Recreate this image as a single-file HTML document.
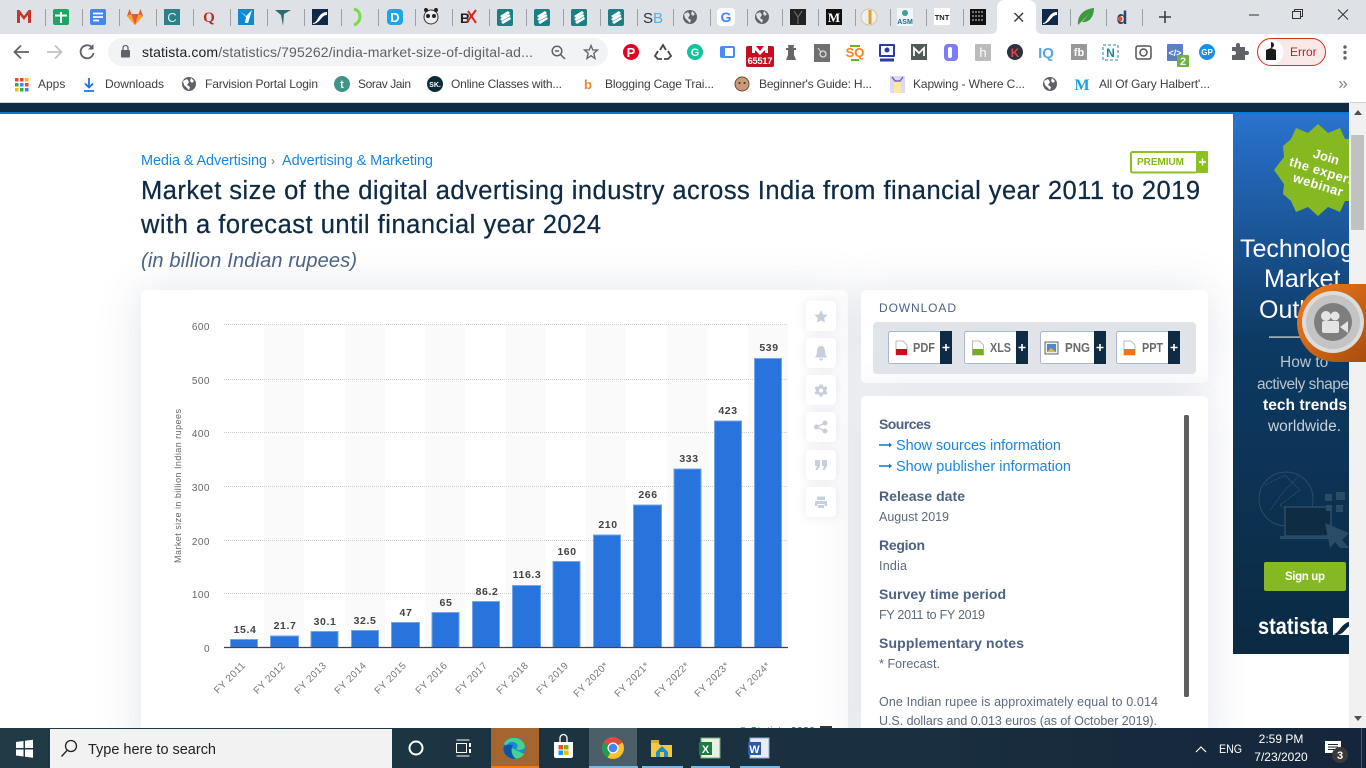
<!DOCTYPE html>
<html><head><meta charset="utf-8"><title>Statista</title>
<style>
html,body{margin:0;padding:0;width:1366px;height:768px;overflow:hidden;background:#fff}
.c{position:absolute;background:#fff;border-radius:5px;box-shadow:0 0 46px rgba(60,80,120,.15)}
svg{position:absolute;left:0;top:0}
text{font-family:"Liberation Sans",sans-serif}
</style></head><body>
<div class="c" style="left:141px;top:290px;width:707px;height:470px"></div>
<div class="c" style="left:861px;top:290px;width:347px;height:93px"></div>
<div class="c" style="left:861px;top:396px;width:347px;height:360px"></div>
<svg width="1366" height="768" viewBox="0 0 1366 768">
<defs>
<clipPath id="ad"><rect x="1233" y="114" width="116" height="540"/></clipPath>
<linearGradient id="adg" x1="0" y1="0" x2="0" y2="1"><stop offset="0" stop-color="#2a73cf"/><stop offset=".42" stop-color="#0c3a63"/><stop offset="1" stop-color="#0b2a42"/></linearGradient>
<linearGradient id="or" x1="0" y1="0" x2="1" y2="1"><stop offset="0" stop-color="#f57f1e"/><stop offset="1" stop-color="#a94c0c"/></linearGradient>
<linearGradient id="tb" x1="0" y1="0" x2="1" y2="0"><stop offset="0" stop-color="#1f3a44"/><stop offset=".6" stop-color="#1a3040"/><stop offset="1" stop-color="#15263b"/></linearGradient>
<g id="gl"><circle r="7" fill="#5f6368"/><path d="M-6 -3 L-2 -5 L0 -2 L-2 1 L1 3 L0 6 L-3 3 L-5 1Z M2 -6 L5 -3 L3 -1 L1 -3Z" fill="#dee1e6"/></g>
<g id="gb"><circle r="7" fill="#5f6368"/><path d="M-6 -3 L-2 -5 L0 -2 L-2 1 L1 3 L0 6 L-3 3 L-5 1Z M2 -6 L5 -3 L3 -1 L1 -3Z" fill="#fff"/></g>
<g id="st"><rect x="-8" y="-8" width="16" height="17" rx="2" fill="#1d7f83"/><path d="M-5 -1 L3 -6 L5 -4 L-3 1Z M-5 2 L4 -3 L5.500 -1 L-3 4Z M-4 5 L5 0 L6 2 L-2 7Z" fill="#fff"/></g>
<g id="sl"><rect x="-8" y="-8" width="16" height="16" fill="#10294a"/><path d="M-7 6 C-2 6 -2 -5 7 -5 L7 -2 C1 -2 1 6 -7 7Z" fill="#fff"/></g>
</defs>

<!-- tab strip -->
<rect width="1366" height="34" fill="#dee1e6"/>
<g stroke="#9aa0a6" stroke-width="1">
<path d="M45.5 9V26M82.5 9V26M119.5 9V26M156.5 9V26M193.5 9V26M230.5 9V26M267.5 9V26M304.5 9V26M341.5 9V26M378.5 9V26M415.5 9V26M452.5 9V26M489.5 9V26M526.5 9V26M563.5 9V26M600.5 9V26M637.5 9V26M673.5 9V26M710.5 9V26M747.5 9V26M782.5 9V26M818.5 9V26M855.5 9V26M890.5 9V26M926.5 9V26M963.5 9V26M1070.5 9V26M1106.5 9V26M1142.5 9V26"/>
</g>
<path d="M990 34 C996 34 997 31 997 27 V8 C997 3 1000 0 1005 0 H1028 C1033 0 1036 3 1036 8 V27 C1036 31 1037 34 1043 34Z" fill="#fff"/>
<!-- favicons -->
<path d="M17 23V10H19.5L24 16L28.500 10H31V23H28V15L24 20L20 15V23Z" fill="#c4392d"/>
<rect x="53" y="9" width="16" height="16" rx="2" fill="#1fa463"/><path d="M61 12V23M55 15.500H67" stroke="#fff" stroke-width="2"/>
<rect x="90" y="9" width="16" height="16" rx="2" fill="#4285f4"/><path d="M93 13.500H103M93 17H103M93 20.500H99" stroke="#fff" stroke-width="1.800"/>
<path d="M127 16L129.500 9L131.500 14H138.500L140.500 9L143 16L135 25Z" fill="#e2583e"/><path d="M127 16L135 25L131.500 14ZM143 16L135 25L138.500 14Z" fill="#fca326"/>
<rect x="164" y="9" width="16" height="16" fill="#2a8187"/><text x="172" y="22" font-size="13" fill="#d8f0f0" text-anchor="middle" font-family="Liberation Serif">C</text>
<text x="209" y="22" font-size="15" font-weight="bold" fill="#b92b27" text-anchor="middle" style="font-family:'Liberation Serif'">Q</text>
<rect x="238" y="9" width="16" height="16" fill="#0f8ad0"/><path d="M240 11 L246 16 L252 10 L248 23 L245 23 L246 17Z" fill="#fff"/>
<path d="M275 10 L291 10 L284 14 L283 26 L281 15Z" fill="#2d6b70"/>
<use href="#sl" x="320" y="17"/>
<path d="M354 9 C362 11 362 22 354 25" fill="none" stroke="#7bdc4a" stroke-width="3"/>
<rect x="387" y="9" width="16" height="16" rx="4" fill="#1ca6e8"/><text x="395" y="22" font-size="13" font-weight="bold" fill="#fff" text-anchor="middle">D</text>
<circle cx="431" cy="17" r="7" fill="#eee" stroke="#333"/><circle cx="428" cy="16" r="2" fill="#222"/><circle cx="434" cy="16" r="2" fill="#222"/><circle cx="426" cy="10" r="2" fill="#222"/><circle cx="436" cy="10" r="2" fill="#222"/>
<text x="465" y="23" font-size="14" font-weight="bold" fill="#222" text-anchor="middle">B</text><path d="M467 22L476 10M468 11L476 23" stroke="#d22" stroke-width="2"/>
<use href="#st" x="505" y="17"/><use href="#st" x="542" y="17"/><use href="#st" x="579" y="17"/><use href="#st" x="616" y="17"/>
<text x="653" y="23" font-size="15" fill="#333" text-anchor="end">S</text><text x="653" y="23" font-size="15" fill="#58aee0">B</text>
<use href="#gl" x="690" y="17"/>
<rect x="717" y="8" width="18" height="18" rx="4" fill="#fff"/><text x="726" y="22" font-size="14" font-weight="bold" fill="#4285f4" text-anchor="middle">G</text>
<use href="#gl" x="762" y="17"/>
<rect x="790" y="9" width="16" height="16" fill="#222"/><path d="M794 11L798 17L802 11M798 17V24" stroke="#777" fill="none"/>
<rect x="826" y="9" width="16" height="16" fill="#111"/><text x="834" y="22" font-size="13" font-weight="bold" fill="#fff" text-anchor="middle" style="font-family:'Liberation Serif'">M</text>
<circle cx="869" cy="17" r="8" fill="#eee" stroke="#cfc79a"/><path d="M870 10V24" stroke="#e0a030" stroke-width="3"/>
<rect x="897" y="8" width="16" height="18" fill="#eef6f6"/><circle cx="905" cy="13" r="3" fill="#3aa0a0"/><text x="905" y="24" font-size="7" font-weight="bold" fill="#1b6aa0" text-anchor="middle">ASM</text>
<rect x="934" y="8" width="16" height="17" fill="#fff"/><text x="942" y="20" font-size="7.500" font-weight="bold" fill="#222" text-anchor="middle">TNT</text>
<rect x="970" y="9" width="16" height="16" fill="#111"/><path d="M972 12H984M972 16H984M972 20H984" stroke="#aaa" stroke-width="1.200" stroke-dasharray="2 1"/>
<path d="M1014.500 13L1023 21.500M1023 13L1014.500 21.500" stroke="#3c4043" stroke-width="1.500"/>
<use href="#sl" x="1050" y="17"/>
<path d="M1078 25C1077 15 1084 9 1094 8C1094 17 1089 23 1082 22L1089 14" fill="#3e9a3c"/>
<text x="1122" y="24" font-size="18" font-weight="bold" fill="#27456e" text-anchor="middle">d</text><circle cx="1120" cy="19" r="2.500" fill="#e2552b"/>
<path d="M1165 11V23M1159 17H1171" stroke="#3c4043" stroke-width="1.600"/>
<path d="M1249 15H1259" stroke="#333"/>
<path d="M1292.500 11.500H1300.500V18.500H1292.500ZM1294.500 11V9.500H1302.500V16.500H1301" fill="none" stroke="#333"/>
<path d="M1338 9.500L1348 19.500M1348 9.500L1338 19.500" stroke="#333"/>

<!-- toolbar -->
<rect y="34" width="1366" height="34" fill="#fff"/>
<path d="M29 52H15M21 45.500L14.500 52L21 58.500" fill="none" stroke="#5f6368" stroke-width="1.800"/>
<path d="M47 52H61M55 45.500L61.500 52L55 58.500" fill="none" stroke="#bdc1c6" stroke-width="1.800"/>
<path d="M92 47.500A6.500 6.500 0 1 0 93.500 53" fill="none" stroke="#5f6368" stroke-width="1.800"/><path d="M93.500 44V49.500H88Z" fill="#5f6368"/>
<rect x="108" y="38" width="500" height="28" rx="14" fill="#f1f3f4"/>
<rect x="121" y="50" width="9" height="7.500" rx="1" fill="#5f6368"/><path d="M123 50V48A2.500 2.500 0 0 1 128 48V50" fill="none" stroke="#5f6368" stroke-width="1.300"/>
<text x="142" y="57" font-size="14" fill="#5f6368" textLength="391"><tspan fill="#202124">statista.com</tspan>/statistics/795262/india-market-size-of-digital-ad...</text>
<circle cx="557" cy="51" r="4.800" fill="none" stroke="#5f6368" stroke-width="1.500"/><path d="M560.500 54.500L565 59M555 51H559" stroke="#5f6368" stroke-width="1.500"/>
<path d="M591 45.500L592.800 50H597.500L593.800 53.200L595 58.500L591 55.700L587 58.500L588.200 53.200L584.500 50H589.200Z" fill="none" stroke="#5f6368" stroke-width="1.300"/>
<!-- extensions -->
<circle cx="631" cy="52" r="8" fill="#e60023"/><text x="631" y="57" font-size="13" font-weight="bold" fill="#fff" text-anchor="middle">P</text>
<path d="M660 50L663 45L666 50M668 51L671 56L668 59H664M658 51L655 56L658 59H662" fill="none" stroke="#444" stroke-width="1.800"/>
<circle cx="695" cy="52" r="8" fill="#15c39a"/><text x="695" y="56" font-size="11" font-weight="bold" fill="#fff" text-anchor="middle">G</text>
<rect x="720" y="46" width="15" height="12" rx="2" fill="#4c8bf5"/><rect x="725" y="48" width="8" height="8" fill="#fff"/>
<rect x="746" y="46" width="28" height="21" rx="2" fill="#c70d22"/><path d="M752 46H756L760 51L764 46H768V53H765V50L760 55L755 50V53H752Z" fill="#fff"/><text x="760" y="64" font-size="9.500" font-weight="bold" fill="#fff" text-anchor="middle" textLength="25">65517</text>
<path d="M788 45H794L793.500 48H796V50H794V55L796 60H786L788 55V50H786V48H788.500Z" fill="#666"/>
<rect x="814" y="44" width="16" height="18" fill="#707070"/><circle cx="823" cy="54" r="3" fill="none" stroke="#ddd" stroke-width="1.300"/><path d="M821 52L818 48" stroke="#ddd"/>
<text x="855" y="57" font-size="13" font-weight="bold" fill="#f58220" text-anchor="middle">SQ</text><path d="M850 46L860 46M851 60H859" stroke="#6ab023" stroke-width="2"/>
<rect x="879" y="44" width="16" height="13" rx="1" fill="#2c3ba8"/><rect x="881" y="46" width="12" height="9" fill="#fff"/><circle cx="887" cy="50" r="2.500" fill="#2c3ba8"/><path d="M880 60H894" stroke="#2c3ba8" stroke-width="3"/>
<rect x="911" y="44" width="16" height="16" fill="#4f5b55"/><path d="M914 56V48L919 53L924 48V56" fill="none" stroke="#fff" stroke-width="1.800"/>
<rect x="944" y="44" width="14" height="17" rx="4" fill="#7d7cf9"/><rect x="948" y="47" width="4" height="11" rx="2" fill="#fff"/>
<rect x="975" y="44" width="16" height="17" rx="1" fill="#bcbcbc"/><text x="983" y="57" font-size="13" fill="#fff" text-anchor="middle">h</text>
<circle cx="1015" cy="52" r="8" fill="#2b3340"/><text x="1015" y="57" font-size="12" font-weight="bold" fill="#e2433f" text-anchor="middle">K</text>
<text x="1046" y="58" font-size="15" font-weight="bold" fill="#59a6e4" text-anchor="middle">IQ</text>
<rect x="1071" y="44" width="16" height="16" fill="#999"/><text x="1079" y="56" font-size="11" font-weight="bold" fill="#fff" text-anchor="middle">fb</text>
<rect x="1103" y="45" width="15" height="15" fill="none" stroke="#18899a" stroke-dasharray="3 2"/><text x="1110.500" y="57" font-size="12" font-weight="bold" fill="#18899a" text-anchor="middle">N</text>
<rect x="1136" y="46" width="15" height="13" rx="2" fill="none" stroke="#555" stroke-width="1.500"/><circle cx="1143.500" cy="52.500" r="3.500" fill="none" stroke="#555" stroke-width="1.500"/>
<rect x="1167" y="44" width="16" height="17" rx="1" fill="#5a7fc2"/><text x="1175" y="56" font-size="9" font-weight="bold" fill="#fff" text-anchor="middle">&lt;/&gt;</text>
<rect x="1177" y="55" width="12" height="12" rx="1" fill="#6cb33f"/><text x="1183" y="65" font-size="11" font-weight="bold" fill="#fff" text-anchor="middle">2</text>
<circle cx="1207" cy="52" r="8" fill="#1a8fe3"/><text x="1207" y="55" font-size="8" font-weight="bold" fill="#fff" text-anchor="middle">GP</text>
<path d="M1232 47H1236V45A2 2 0 0 1 1240 45V47H1245V51H1247A2 2 0 0 1 1247 55H1245V60H1232V55H1234A2 2 0 0 0 1234 51H1232Z" fill="#5f6368"/>
<rect x="1257.500" y="38.500" width="68" height="27" rx="13.500" fill="#fbe9e7" stroke="#d93025"/>
<circle cx="1271" cy="52" r="12.500" fill="#fff"/><path d="M1271 42A3 3 0 0 1 1271 48L1276 50V60H1266V50L1271 48Z" fill="#1b1b1b"/>
<text x="1290" y="56" font-size="12" fill="#b3261e">Error</text>
<circle cx="1345" cy="47" r="1.700" fill="#5f6368"/><circle cx="1345" cy="52.500" r="1.700" fill="#5f6368"/><circle cx="1345" cy="58" r="1.700" fill="#5f6368"/>

<!-- bookmarks -->
<rect y="68" width="1366" height="34" fill="#fff"/><rect y="102" width="1366" height="1" fill="#d0d2d6"/>
<g>
<rect x="15" y="78" width="3.500" height="3.500" fill="#ea4335"/><rect x="20" y="78" width="3.500" height="3.500" fill="#ea4335"/><rect x="25" y="78" width="3.500" height="3.500" fill="#fbbc04"/>
<rect x="15" y="83" width="3.500" height="3.500" fill="#34a853"/><rect x="20" y="83" width="3.500" height="3.500" fill="#4285f4"/><rect x="25" y="83" width="3.500" height="3.500" fill="#ea4335"/>
<rect x="15" y="88" width="3.500" height="3.500" fill="#fbbc04"/><rect x="20" y="88" width="3.500" height="3.500" fill="#34a853"/><rect x="25" y="88" width="3.500" height="3.500" fill="#4285f4"/>
</g>
<g font-size="12" fill="#3c4043">
<text x="38" y="88">Apps</text>
<text x="105" y="88" textLength="59">Downloads</text>
<text x="205" y="88" textLength="113">Farvision Portal Login</text>
<text x="358" y="88" textLength="53">Sorav Jain</text>
<text x="451" y="88" textLength="111">Online Classes with...</text>
<text x="605" y="88" textLength="109">Blogging Cage Trai...</text>
<text x="759" y="88" textLength="113">Beginner's Guide: H...</text>
<text x="913" y="88" textLength="112">Kapwing - Where C...</text>
<text x="1099" y="88" textLength="111">All Of Gary Halbert'...</text>
</g>
<path d="M89 78V87M85 83.500L89 87.500L93 83.500M84 91H94" fill="none" stroke="#1a73e8" stroke-width="1.800"/>
<use href="#gb" x="189" y="84"/>
<circle cx="342" cy="84" r="8" fill="#3f9486"/><text x="342" y="88" font-size="11" font-weight="bold" fill="#fff" text-anchor="middle">t</text>
<circle cx="435" cy="84" r="8" fill="#0d2b36"/><text x="435" y="87" font-size="7" font-weight="bold" fill="#fff" text-anchor="middle">SK.</text>
<text x="588" y="89" font-size="13" font-weight="bold" fill="#e8872a" text-anchor="middle">b</text>
<circle cx="742" cy="84" r="7" fill="#c79a78" stroke="#6b4a36"/><circle cx="739.500" cy="83" r="1" fill="#333"/><circle cx="744.500" cy="83" r="1" fill="#333"/>
<rect x="890" y="76" width="15" height="17" fill="#dcdaf5"/><rect x="894" y="81" width="7" height="12" fill="#f8e9a5"/><path d="M892 77L895 81H900L903 77" stroke="#7468c4" fill="none" stroke-width="1.500"/>
<use href="#gb" x="1050" y="84"/>
<text x="1082" y="90" font-size="16" font-weight="bold" fill="#12a3e0" text-anchor="middle" style="font-family:'Liberation Serif'">M</text>
<path d="M1339.500 81L1342.500 84.500L1339.500 88M1343.500 81L1346.500 84.500L1343.500 88" fill="none" stroke="#888" stroke-width="1.300"/>

<!-- site header -->
<rect y="103" width="1349" height="9" fill="#0f2a43"/><rect y="112" width="1349" height="2" fill="#0a78d6"/>

<!-- heading -->
<g font-size="14.500" fill="#1a86e0">
<text x="141" y="165" textLength="126">Media &amp; Advertising</text>
<text x="271" y="165" font-size="12" fill="#667">›</text>
<text x="282" y="165" textLength="151">Advertising &amp; Marketing</text>
</g>
<g font-size="25.500" fill="#0f2a43" stroke="#0f2a43" stroke-width=".25">
<text x="141" y="199" textLength="1059">Market size of the digital advertising industry across India from financial year 2011 to 2019</text>
<text x="141" y="233" textLength="460">with a forecast until financial year 2024</text>
</g>
<text x="141" y="267" font-size="20" font-style="italic" fill="#4d6282" textLength="216">(in billion Indian rupees)</text>
<rect x="1131" y="152" width="66" height="20.500" rx="1.500" fill="#fff" stroke="#8cc11f" stroke-width="2"/>
<text x="1137" y="165" font-size="10" font-weight="bold" fill="#82b81a" textLength="47">PREMIUM</text>
<rect x="1197" y="151" width="11" height="22" rx="1" fill="#8cc11f"/><path d="M1202.500 158.500V165.500M1199 162H1206" stroke="#fff" stroke-width="1.500"/>

<!-- chart -->
<g fill="#fafafa"><rect x="264" y="324" width="40" height="323"/><rect x="345" y="324" width="40" height="323"/><rect x="425" y="324" width="40" height="323"/><rect x="506" y="324" width="40" height="323"/><rect x="586" y="324" width="40" height="323"/><rect x="667" y="324" width="40" height="323"/><rect x="748" y="324" width="40" height="323"/></g>
<g stroke="#cfcfcf" stroke-dasharray="1 1"><path d="M224 324.500H788M224 379.500H788M224 432.500H788M224 486.500H788M224 540.500H788M224 593.500H788"/></g>
<g fill="#2874dc" stroke="#74a5ea" stroke-width="1">
<rect x="230.500" y="639.500" width="27" height="8"/><rect x="270.500" y="636" width="28" height="11.500"/><rect x="311" y="631.500" width="27" height="16"/><rect x="351.500" y="630.500" width="27" height="17"/><rect x="391.500" y="622.500" width="28" height="25"/><rect x="432" y="612.500" width="27" height="35"/><rect x="472.500" y="601.500" width="27" height="46"/><rect x="512.500" y="585.500" width="28" height="62"/><rect x="553" y="561.500" width="27" height="86"/><rect x="593.500" y="535" width="27" height="112.500"/><rect x="633.500" y="505" width="28" height="142.500"/><rect x="674" y="469" width="27" height="178.500"/><rect x="714.500" y="421" width="27" height="226.500"/><rect x="754.500" y="358.500" width="27" height="289"/>
</g>
<path d="M224 647.500H788" stroke="#444" stroke-width="1.200"/>
<g font-size="10" fill="#666" text-anchor="end" letter-spacing=".5">
<text x="210" y="330">600</text><text x="210" y="384">500</text><text x="210" y="437">400</text><text x="210" y="491">300</text><text x="210" y="545">200</text><text x="210" y="598">100</text><text x="210" y="652">0</text>
</g>
<text transform="translate(181,486) rotate(-90)" font-size="9" fill="#666" text-anchor="middle" textLength="154">Market size in billion Indian rupees</text>
<g font-size="10.500" font-weight="bold" fill="#444" text-anchor="middle" letter-spacing=".6">
<text x="245" y="633">15.4</text><text x="285" y="629">21.7</text><text x="325" y="625">30.1</text><text x="365" y="624">32.5</text><text x="406" y="616">47</text><text x="446" y="606">65</text><text x="487" y="595">86.2</text><text x="527" y="578">116.3</text><text x="567" y="555">160</text><text x="608" y="528">210</text><text x="648" y="498">266</text><text x="689" y="462">333</text><text x="728" y="414">423</text><text x="769" y="351">539</text>
</g>
<g font-size="10" fill="#777" text-anchor="end" letter-spacing=".4">
<text transform="translate(246,666) rotate(-45)">FY 2011</text><text transform="translate(286,666) rotate(-45)">FY 2012</text><text transform="translate(327,666) rotate(-45)">FY 2013</text><text transform="translate(367,666) rotate(-45)">FY 2014</text><text transform="translate(407,666) rotate(-45)">FY 2015</text><text transform="translate(448,666) rotate(-45)">FY 2016</text><text transform="translate(488,666) rotate(-45)">FY 2017</text><text transform="translate(529,666) rotate(-45)">FY 2018</text><text transform="translate(569,666) rotate(-45)">FY 2019</text><text transform="translate(609,666) rotate(-45)">FY 2020*</text><text transform="translate(650,666) rotate(-45)">FY 2021*</text><text transform="translate(690,666) rotate(-45)">FY 2022*</text><text transform="translate(730,666) rotate(-45)">FY 2023*</text><text transform="translate(771,666) rotate(-45)">FY 2024*</text>
</g>
<text x="739" y="734" font-size="10.500" fill="#0f5f9f" textLength="76">© Statista 2020</text><path d="M820 726H832V733H820Z" fill="#333"/>

<!-- side actions -->
<g fill="#fff" style="filter:drop-shadow(0 0 5px rgba(70,90,130,.13))">
<rect x="806" y="301" width="30" height="30" rx="4"/><rect x="806" y="338" width="30" height="30" rx="4"/><rect x="806" y="375" width="30" height="30" rx="4"/><rect x="806" y="412" width="30" height="30" rx="4"/><rect x="806" y="450" width="30" height="30" rx="4"/><rect x="806" y="487" width="30" height="30" rx="4"/>
</g>
<g fill="#c9cfda" transform="translate(821 0)">
<path d="M0 310L2 314.200L6.500 314.900L3.200 318L4 322.500L0 320.400L-4 322.500L-3.200 318L-6.500 314.900L-2 314.200Z"/>
<path d="M0 346C-3 346 -4 348.500 -4 351C-4 354 -5 356 -6 357.500H6C5 356 4 354 4 351C4 348.500 3 346 0 346ZM-2 358.500H2A2 2 0 0 1 -2 358.500Z"/>
<path fill-rule="evenodd" d="M-1.300 384.500H1.300L1.800 386.300L3.500 387L5 386L6.500 388.300L5.200 389.700V391.300L6.500 392.700L5 395L3.500 394L1.800 394.700L1.300 396.500H-1.300L-1.800 394.700L-3.500 394L-5 395L-6.500 392.700L-5.200 391.300V389.700L-6.500 388.300L-5 386L-3.500 387L-1.800 386.300ZM0 388.500A2 2 0 1 0 0 392.500A2 2 0 1 0 0 388.500Z"/>
<circle cx="4" cy="423" r="2.500"/><circle cx="4" cy="431" r="2.500"/><circle cx="-4.500" cy="427" r="2.500"/><path d="M-4.500 427L4 423M-4.500 427L4 431" stroke="#c9cfda" stroke-width="1.500"/>
<path d="M-6 460H-1V466L-3.500 470H-5.500L-4 466H-6ZM1 460H6V466L3.500 470H1.500L3 466H1Z"/>
<path fill-rule="evenodd" d="M-4 496.500H4V500H-4ZM-6 501H6V506H3.500V504H-3.500V506H-6ZM-3 505H3V508H-3Z"/>
</g>

<!-- download -->
<text x="879" y="312" font-size="12" fill="#4d6282" textLength="77">DOWNLOAD</text>
<rect x="873" y="322" width="323" height="52" rx="4" fill="#e0e3e7"/>
<g fill="#fff" stroke="#a9b8cf"><rect x="888.500" y="331.500" width="63" height="32" rx="2"/><rect x="964.500" y="331.500" width="63" height="32" rx="2"/><rect x="1040.500" y="331.500" width="65" height="32" rx="2"/><rect x="1116.500" y="331.500" width="63" height="32" rx="2"/></g>
<g fill="#0f2a43"><rect x="940" y="331" width="12" height="33"/><rect x="1016" y="331" width="12" height="33"/><rect x="1094" y="331" width="12" height="33"/><rect x="1168" y="331" width="12" height="33"/></g>
<g stroke="#fff" stroke-width="1.600"><path d="M946 344V351M942.500 347.500H949.500M1022 344V351M1018.500 347.500H1025.500M1100 344V351M1096.500 347.500H1103.500M1174 344V351M1170.500 347.500H1177.500"/></g>
<g font-size="13" font-weight="bold" fill="#6a6a6a"><text x="913" y="352" textLength="22" lengthAdjust="spacingAndGlyphs">PDF</text><text x="990" y="352" textLength="21" lengthAdjust="spacingAndGlyphs">XLS</text><text x="1065" y="352" textLength="25" lengthAdjust="spacingAndGlyphs">PNG</text><text x="1142" y="352" textLength="21" lengthAdjust="spacingAndGlyphs">PPT</text></g>
<path d="M896 341H903L907 345V355H896Z" fill="#fff" stroke="#aaa" stroke-width=".8"/><rect x="896" y="349" width="11" height="6" fill="#c8101e"/>
<path d="M972.500 341H979.500L983.500 345V355H972.500Z" fill="#fff" stroke="#aaa" stroke-width=".8"/><rect x="972.500" y="349" width="11" height="6" fill="#74ac23"/>
<rect x="1045" y="342" width="13" height="12" fill="#eee" stroke="#666"/><rect x="1047" y="344" width="9" height="8" fill="#4a8bc4"/><path d="M1047 352L1051 348L1056 352Z" fill="#e8b53a"/>
<path d="M1124 341H1131L1135 345V355H1124Z" fill="#fff" stroke="#aaa" stroke-width=".8"/><rect x="1124" y="349" width="11" height="6" fill="#e8771f"/>

<!-- sources -->
<g font-size="14" font-weight="bold" fill="#4d6282">
<text x="879" y="429" textLength="52">Sources</text>
<text x="879" y="501" textLength="86">Release date</text>
<text x="879" y="550" textLength="46">Region</text>
<text x="879" y="599" textLength="127">Survey time period</text>
<text x="879" y="648" textLength="145">Supplementary notes</text>
</g>
<g font-size="14.500" fill="#1a86e0"><text x="896" y="450" textLength="165">Show sources information</text><text x="896" y="471" textLength="175">Show publisher information</text></g>
<g fill="#0a78d6"><path d="M879 444.300H889V442.500L892 445L889 447.500V445.700H879Z"/><path d="M879 465.300H889V463.500L892 466L889 468.500V466.700H879Z"/></g>
<g font-size="12.500" fill="#5d6a7a">
<text x="879" y="521" textLength="70">August 2019</text><text x="879" y="570" textLength="28">India</text><text x="879" y="619" textLength="106">FY 2011 to FY 2019</text><text x="879" y="668" textLength="61">* Forecast.</text>
<text x="879" y="706" textLength="279">One Indian rupee is approximately equal to 0.014</text><text x="879" y="725" textLength="278">U.S. dollars and 0.013 euros (as of October 2019).</text>
</g>
<rect x="1184" y="415" width="5" height="282" rx="1.500" fill="#5f5f5f"/>

<!-- ad -->
<g clip-path="url(#ad)">
<rect x="1233" y="114" width="116" height="540" fill="url(#adg)"/>
<path d="M1318 124L1328 133L1340 128L1345 139L1358 139L1358 152L1368 160L1362 170L1368 180L1358 188L1358 201L1345 201L1340 212L1328 207L1318 216L1308 207L1296 212L1291 201L1283 194L1284 184L1274 170L1284 157L1283 146L1291 139L1296 128L1308 133Z" fill="#85b821"/>
<g fill="#fff" font-weight="bold" text-anchor="middle"><text transform="translate(1325,161) rotate(17)" font-size="13">Join</text><text transform="translate(1320,175) rotate(17)" font-size="13" letter-spacing=".4">the expert</text><text transform="translate(1317,189) rotate(17)" font-size="13" letter-spacing=".4">webinar</text></g>
<text x="1240" y="257" font-size="25" fill="#fff">Technology</text>
<text x="1264" y="287" font-size="25" fill="#fff">Market</text>
<text x="1259" y="318" font-size="25" fill="#fff">Outlook</text>
<rect x="1269" y="336.500" width="70" height="1.200" fill="#ddd"/>
<text x="1280" y="367" font-size="15.500" fill="#b8c4cf">How to</text>
<text x="1257" y="389" font-size="15.500" fill="#b8c4cf" textLength="92">actively shape</text>
<text x="1263" y="410" font-size="15.500" font-weight="bold" fill="#fff" textLength="84">tech trends</text>
<text x="1268" y="431" font-size="15.500" fill="#c8d2da" textLength="73">worldwide.</text>
<g fill="none" stroke="#2b4c66"><circle cx="1286" cy="499" r="27"/><path d="M1265 485L1285 475L1300 490L1280 505L1295 515M1270 510L1285 490L1300 475" stroke-dasharray="2 1"/></g>
<rect x="1285" y="507" width="46" height="29" fill="#0e2c44" stroke="#2b4c66" stroke-width="1.500"/><rect x="1280" y="536" width="56" height="3" fill="#2b4c66"/>
<g fill="#2b4c66"><rect x="1325" y="494" width="7" height="7"/><rect x="1336" y="492" width="9" height="8"/><rect x="1326" y="505" width="6" height="6"/><rect x="1336" y="505" width="7" height="7"/><path d="M1325 523L1349 533L1342 540L1349 548H1340L1335 542L1330 548Z"/></g>
<rect x="1264" y="562" width="82" height="29" rx="2" fill="#85b821"/>
<text x="1305" y="580" font-size="11.500" font-weight="bold" fill="#fff" text-anchor="middle" textLength="40">Sign up</text>
<text x="1258" y="634" font-size="23" font-weight="bold" fill="#fff" textLength="70" lengthAdjust="spacingAndGlyphs">statista</text>
<rect x="1333" y="618" width="20" height="17" fill="#fff"/><path d="M1333 634C1340 634 1340 622 1353 621V625C1345 626 1345 635 1336 635Z" fill="#0b2a42"/>
</g>

<!-- scrollbar -->
<rect x="1349" y="103" width="17" height="625" fill="#f1f1f1"/>
<path d="M1358 110L1362 115H1354Z" fill="#505050"/>
<rect x="1351" y="135" width="13" height="95" fill="#c1c1c1"/>
<path d="M1354 716H1362L1358 721Z" fill="#505050"/>

<!-- floating record -->
<path d="M1336 284H1366V362H1336A39 39 0 0 1 1336 284Z" fill="url(#or)"/>
<circle cx="1333" cy="322" r="31" fill="#dcdcdc"/><circle cx="1333" cy="322" r="27" fill="#c4c4c4"/><circle cx="1333" cy="322" r="19" fill="#7e7e7e"/>
<circle cx="1326" cy="316" r="5" fill="#e4e4e4"/><circle cx="1335" cy="316" r="4.500" fill="#e4e4e4"/><rect x="1322" y="321" width="17" height="12" rx="2" fill="#e4e4e4"/><path d="M1340 327L1348 321V333Z" fill="#e4e4e4"/>

<!-- taskbar -->
<rect y="728" width="1366" height="40" fill="url(#tb)"/>
<rect x="50" y="729" width="342" height="39" fill="#f2f2f2"/>
<path d="M16 742L23.500 741V748H16ZM25 740.800L33 739.700V748H25ZM16 749.500H23.500V756.500L16 755.500ZM25 749.500H33V757.800L25 756.700Z" fill="#fff"/>
<circle cx="71" cy="746" r="5.500" fill="none" stroke="#222" stroke-width="1.300"/><path d="M67 750.500L61.500 756.500" stroke="#222" stroke-width="1.300"/>
<text x="88" y="754" font-size="14.500" fill="#222" textLength="128">Type here to search</text>
<circle cx="416" cy="748" r="6.500" fill="none" stroke="#fff" stroke-width="2"/>
<path d="M456.500 740H469.500M456.500 756H469.500" stroke="#fff"/><rect x="456.500" y="743.500" width="10" height="9" fill="none" stroke="#fff"/><path d="M470 743V747M470 749V753" stroke="#fff" stroke-width="2"/>
<rect x="491" y="728" width="48" height="40" fill="#a5652f"/><rect x="491" y="766" width="48" height="2" fill="#f47a10"/>
<circle cx="514" cy="748" r="11" fill="#1a8ad6"/><path d="M504 744C507 736 522 735 525 746C525 750 519 751 516 749C520 746 516 741 511 742C505 743 503 752 510 757C516 760 522 758 524 754" fill="#46d18e"/><path d="M503.500 748C503 755 509 759 516 759C512 756 510 750 513 745C508 744 504 745 503.500 748Z" fill="#0c55a5"/>
<path d="M554 742H573V756A2 2 0 0 1 571 758H556A2 2 0 0 1 554 756Z" fill="#fff"/><path d="M560 742V738A3.500 3.500 0 0 1 567 738V742" fill="none" stroke="#fff" stroke-width="1.300"/><rect x="558.500" y="745" width="4.500" height="4.500" fill="#f25022"/><rect x="564" y="745" width="4.500" height="4.500" fill="#7fba00"/><rect x="558.500" y="750.500" width="4.500" height="4.500" fill="#00a4ef"/><rect x="564" y="750.500" width="4.500" height="4.500" fill="#ffb900"/>
<rect x="589" y="728" width="48" height="40" fill="#4a5f68"/><rect x="589" y="766" width="49" height="2" fill="#76b9ed"/><rect x="642" y="766" width="41" height="2" fill="#76b9ed"/><rect x="691" y="766" width="39" height="2" fill="#76b9ed"/><rect x="740" y="766" width="40" height="2" fill="#76b9ed"/>
<circle cx="613" cy="748" r="11" fill="#dd4b3e"/><path d="M613 748L622.500 742.500A11 11 0 0 1 607.500 757.500Z" fill="#fbc02d"/><path d="M613 748L607.500 757.500A11 11 0 0 1 603.500 742.500Z" fill="#1e9f4f"/><circle cx="613" cy="748" r="5.500" fill="#fff"/><circle cx="613" cy="748" r="4.300" fill="#4285f4"/>
<path d="M651 742H658L660 745H672V757H651Z" fill="#f6c945"/><rect x="651" y="740" width="8" height="3" fill="#e5a823"/><path d="M656 752L662 746L668 752V757H656Z" fill="#1c8fd3"/><rect x="660" y="752" width="4" height="5" fill="#f6c945"/>
<rect x="701" y="738" width="19" height="20" fill="#e8f3e4" stroke="#79a970"/><rect x="699" y="742" width="13" height="13" fill="#1e7b45"/><text x="705.500" y="753" font-size="11" font-weight="bold" fill="#fff" text-anchor="middle">X</text>
<rect x="750" y="738" width="19" height="20" fill="#e8eef8" stroke="#8fa8d0"/><rect x="748" y="742" width="13" height="13" fill="#2b5aa8"/><text x="754.500" y="753" font-size="11" font-weight="bold" fill="#fff" text-anchor="middle">W</text>
<path d="M1196 752L1201 747L1206 752" fill="none" stroke="#fff" stroke-width="1.200"/>
<text x="1219" y="753" font-size="12" fill="#fff" textLength="23" lengthAdjust="spacingAndGlyphs">ENG</text>
<text x="1281" y="743" font-size="12" fill="#fff" text-anchor="middle">2:59 PM</text>
<text x="1281" y="761" font-size="12" fill="#fff" text-anchor="middle">7/23/2020</text>
<path d="M1325 741H1341V753H1336L1333 756V753H1325Z" fill="#fff"/><path d="M1328 744.500H1338M1328 747H1338M1328 749.500H1338" stroke="#15263b"/>
<circle cx="1340" cy="755" r="8" fill="#3a3a3a"/><text x="1340" y="759" font-size="11" font-weight="bold" fill="#fff" text-anchor="middle">3</text>
<rect x="1361" y="728" width="1" height="40" fill="#4a5a6a"/>
</svg>
</body></html>
